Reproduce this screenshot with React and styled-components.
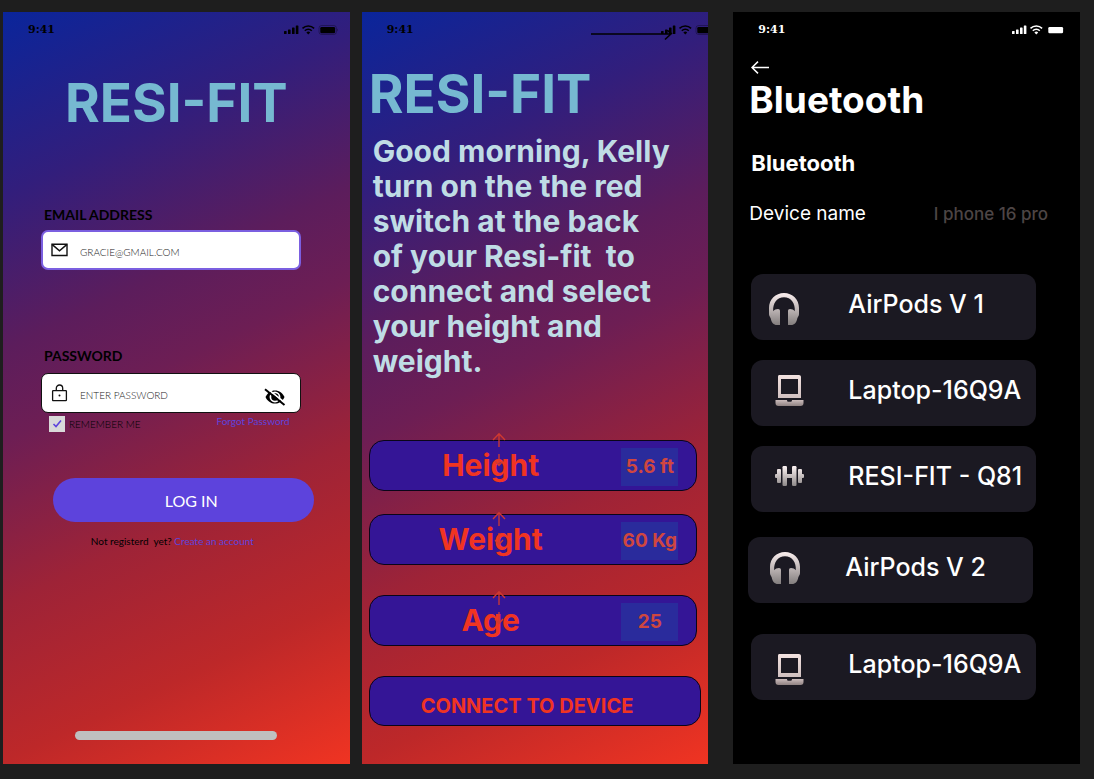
import React, { useState } from "react";
import styled, { createGlobalStyle } from "styled-components";

const GlobalStyle = createGlobalStyle`
  *, *::before, *::after { box-sizing: border-box; }
  body { margin: 0; background: #1e1e1e; }
  h1, h2, p, ul { margin: 0; padding: 0; }
  button, input { font: inherit; color: inherit; margin: 0; padding: 0; border: 0; background: none; }
  button { cursor: pointer; }
  svg { display: block; flex: none; }
`;

const sans = `Inter, "Liberation Sans", sans-serif`;
const lato = `Lato, "Liberation Sans", sans-serif`;

const Board = styled.main`
  display: flex;
  min-height: 100vh;
  padding: 12px 14px 15px 3px;
  font-family: ${sans};
`;

const Screen = styled.section`
  flex: 1 1 0;
  min-width: 0;
  display: flex;
  flex-direction: column;
  overflow: hidden;
  margin-left: ${(p) => p.$gap || 0}px;
  color: ${(p) => (p.$dark ? "#fff" : "#000")};
  background: ${(p) =>
    p.$dark
      ? "#000"
      : "linear-gradient(155deg, #0a259b 0%, #321e7c 20%, #5c1d5c 37%, #6d1e54 47%, #9e2337 65%, #bd2829 82%, #f03422 100%)"};
`;

const StatusBar = styled.header`
  display: flex;
  align-items: center;
  justify-content: space-between;
  height: 36px;
  padding: 0 ${(p) => p.$right}px 0 25px;
  flex: none;
`;

const Time = styled.span`
  font: bold 11px/16px "DejaVu Serif", serif;
`;

const StatusIcons = styled.div`
  position: relative;
  margin-right: ${(p) => (p.$bleed ? -7 : 0)}px;
`;

const StrayArrow = styled.svg`
  position: absolute;
  right: 41px;
  top: 6px;
`;

const Brand = styled.h1`
  font-size: 53px;
  line-height: 64px;
  font-weight: 700;
  color: #76b9d1;
  text-align: ${(p) => p.$align || "left"};
  margin-top: ${(p) => p.$top}px;
`;

const LoginForm = styled.form`
  flex: 1;
  display: flex;
  flex-direction: column;
  font-family: ${lato};
`;

const Field = styled.div`
  display: flex;
  flex-direction: column;
  padding: 0 49px 0 38px;
  margin-top: ${(p) => p.$top}px;
`;

const FieldLabel = styled.label`
  font-size: 14px;
  line-height: 16px;
  font-weight: 700;
  padding-left: 3px;
`;

const InputBox = styled.div`
  display: flex;
  align-items: center;
  height: 40px;
  margin-top: ${(p) => p.$top}px;
  padding: 0 14px 0 ${(p) => (p.$active ? 8 : 9)}px;
  gap: 12px;
  background: #fff;
  border-radius: 7px;
  border: ${(p) => (p.$active ? "2px solid #7b5fe0" : "1px solid #111")};
`;

const TextInput = styled.input`
  flex: 1;
  min-width: 0;
  height: 16px;
  margin-top: 4px;
  font-size: 10px;
  font-weight: 300;
  outline: none;
  color: #222;
  &::placeholder { color: #222; opacity: 1; }
`;

const EyeButton = styled.button`
  margin-top: 8px;
`;

const Options = styled.div`
  display: flex;
  align-items: center;
  justify-content: space-between;
  padding: 0 60px 0 46px;
  margin-top: 3px;
`;

const Remember = styled.label`
  display: flex;
  align-items: center;
  gap: 4px;
  font-size: 10px;
  line-height: 16px;
  font-weight: 300;
`;

const Tick = styled.input`
  appearance: none;
  width: 16px;
  height: 16px;
  background: #d9d9d9;
  &:checked {
    background: #d9d9d9
      url("data:image/svg+xml,%3Csvg xmlns='http://www.w3.org/2000/svg' viewBox='0 0 16 16'%3E%3Cpath d='M4.5 8l2.5 2.5 5-6' fill='none' stroke='%235d43dc' stroke-width='1.6'/%3E%3C/svg%3E");
  }
`;

const TextLink = styled.a`
  color: #5d43dc;
  text-decoration: none;
  font-size: 10px;
  line-height: 16px;
`;

const ForgotLink = styled(TextLink)`
  align-self: flex-start;
  line-height: 10px;
`;

const LoginButton = styled.button`
  height: 44px;
  margin: 46px 36px 0 50px;
  padding-left: 16px;
  border-radius: 22px;
  background: #5d43dc;
  color: #fff;
  font-size: 16px;
`;

const SignUp = styled.p`
  margin-top: 11px;
  padding-right: 8px;
  text-align: center;
  white-space: pre;
  font-size: 10px;
  line-height: 16px;
`;

const HomeBar = styled.div`
  width: 202px;
  height: 9px;
  border-radius: 5px;
  background: #bfbfbf;
  margin: auto auto 24px;
`;

const SetupForm = styled.form`
  padding: 0 7px;
`;

const Greeting = styled.p`
  margin: 8px 0 0 4px;
  white-space: pre-line;
  font-size: 30px;
  line-height: 35px;
  font-weight: 700;
  color: #bfdce5;
`;

const Pill = styled.div`
  position: relative;
  display: grid;
  grid-template-columns: 224px 1fr;
  align-items: center;
  height: 51px;
  margin: ${(p) => p.$top}px 4px 0 0;
  padding: 0 18px 0 9px;
  border: 1px solid #0a0518;
  border-radius: 15px;
  background: #341596;
`;

const PillLabel = styled.label`
  font-size: 30px;
  line-height: 35px;
  font-weight: 700;
  color: #f03422;
  text-align: center;
`;

const PillValue = styled.input`
  justify-self: end;
  width: 57px;
  height: 38px;
  margin-top: 2px;
  text-align: center;
  font-size: 19px;
  font-weight: 700;
  color: #cf4640;
  background: #2a2b9c;
  outline: none;
`;

const Stepper = styled.div`
  position: absolute;
  left: 122px;
  top: ${(p) => p.$top}px;
  display: flex;
  flex-direction: column;
  gap: 7px;
`;

const ConnectButton = styled.button`
  display: block;
  width: 100%;
  height: 50px;
  margin-top: 30px;
  padding: 10px 16px 0 0;
  border: 1px solid #0a0518;
  border-radius: 15px;
  background: #341596;
  color: #f03422;
  font-size: 20px;
  font-weight: 700;
`;

const Settings = styled.div`
  display: flex;
  flex-direction: column;
  padding: 0 15px 0 16px;
`;

const BackButton = styled.button`
  align-self: flex-start;
  margin: 13px 0 0 2px;
`;

const PageTitle = styled.h1`
  font-size: 37px;
  line-height: 40px;
  font-weight: 700;
  margin-top: 6px;
`;

const SectionTitle = styled.h2`
  font-size: 22px;
  line-height: 24px;
  font-weight: 700;
  margin: 31px 0 0 2px;
`;

const DeviceRow = styled.div`
  display: flex;
  align-items: center;
  justify-content: space-between;
  padding-right: 17px;
  margin-top: 27px;
  font-size: 19px;
  line-height: 24px;
`;

const DeviceName = styled.span`
  font-size: 17px;
  font-weight: 500;
  color: #4d4545;
`;

const DeviceList = styled.ul`
  list-style: none;
  margin: 48px 29px 0 2px;
`;

const Device = styled.li`
  margin: ${(p) => p.$top || 0}px ${(p) => p.$shift || 0}px 0 ${(p) => -(p.$shift || 0)}px;
`;

const DeviceButton = styled.button`
  display: grid;
  grid-template-columns: 79px 1fr;
  align-items: center;
  width: 100%;
  height: 66px;
  padding-left: 18px;
  border-radius: 12px;
  background: #1b1922;
  text-align: left;
  white-space: nowrap;
`;

const DeviceLabel = styled.span`
  font-size: 25px;
  line-height: 30px;
  font-weight: 500;
  padding-bottom: 6px;
`;

const IconSlot = styled.span`
  padding: ${(p) => p.$pad};
`;

function Status({ right, bleed, outline }) {
  return (
    <StatusBar $right={right}>
      <Time>9:41</Time>
      <StatusIcons $bleed={bleed}>
        <svg width="54" height="12" viewBox="0 0 54 12" fill="currentColor">
          <rect x="0" y="7" width="2.6" height="3" rx=".6" />
          <rect x="4" y="5.5" width="2.6" height="4.5" rx=".6" />
          <rect x="8" y="3.5" width="2.6" height="6.5" rx=".6" />
          <rect x="11.8" y="1.5" width="2.6" height="8.5" rx=".6" />
          <g fill="none" stroke="currentColor" strokeWidth="1.5">
            <path d="M18.5 4.4a8.3 8.3 0 0 1 11.6 0" />
            <path d="M20.8 6.8a5 5 0 0 1 7 0" />
          </g>
          <path d="M24.3 10.4l-1.9-1.9a2.7 2.7 0 0 1 3.8 0z" />
          {outline && <rect x="35" y="1.5" width="17.4" height="9" rx="2.6" fill="none" stroke="currentColor" opacity=".3" />}
          <rect x="36.3" y="2.9" width="14.8" height="6.3" rx="1.3" />
          {outline && <path d="M53.2 4.6v2.8c1-.5 1-2.3 0-2.8z" opacity=".4" />}
        </svg>
        {bleed && (
          <StrayArrow width="84" height="12" viewBox="0 0 84 12" fill="none" stroke="currentColor" strokeWidth="1.6">
            <path d="M1 4h79M77 0l4 3.500M82 3l-7 6.500" />
          </StrayArrow>
        )}
      </StatusIcons>
    </StatusBar>
  );
}

const Mail = () => (
  <svg width="17" height="14" viewBox="0 0 17 14" fill="none" stroke="#111" strokeWidth="1.4">
    <path d="M1 1.2h15v11.3H1z" />
    <path d="M1 1.4l7.5 6.4L16 1.4" />
  </svg>
);

const Lock = () => (
  <svg width="17" height="18" viewBox="0 0 17 18" fill="none" stroke="#111" strokeWidth="1.3">
    <rect x="1.6" y="6.6" width="13.8" height="10" rx=".6" />
    <path d="M5.3 6.6V4.2a3.2 3.2 0 0 1 6.4 0v2.4" />
    <circle cx="8.5" cy="11.4" r="1" fill="#111" stroke="none" />
  </svg>
);

const EyeOff = () => (
  <svg width="22" height="20" viewBox="0 0 22 20">
    <path
      d="M1.500 10C3.200 6 6.800 3.400 11 3.400S18.800 6 20.500 10C18.800 14 15.200 16.600 11 16.600S3.200 14 1.500 10z"
      fill="#000"
    />
    <circle cx="11" cy="10" r="4.600" fill="none" stroke="#fff" strokeWidth="1.700" />
    <path d="M2.300 .9L21.500 16.300" stroke="#fff" strokeWidth="1.800" />
    <path d="M1 2.300L20.500 18" stroke="#000" strokeWidth="2" />
  </svg>
);

const Arrow = ({ down }) => (
  <svg width="14" height="15" viewBox="0 0 14 15" fill="none" stroke="#d13a30" strokeWidth="1.3">
    <path d={down ? "M7 0v12M3 7l4 4.500L11 7" : "M7 15V2M1 8l6-6.3L13 8"} />
  </svg>
);

const Headphones = ({ id }) => (
  <svg width="30" height="32" viewBox="0 0 30 32">
    <defs>
      <linearGradient id={id} x1="0" y1="0" x2="0" y2="1">
        <stop offset="0" stopColor="#fbefef" />
        <stop offset="1" stopColor="#837e7e" />
      </linearGradient>
    </defs>
    <path
      fill={`url(#${id})`}
      d="M15 0C6.500 0 0 6.600 0 15v6c0 2 .8 2.300 1.600 4C2.400 29.500 4.500 32 8 32h3V18.200C11 16.800 10.300 16 9 16c-2 0-3.600.8-4.800 2.200C3.600 10.500 8 4.300 15 4.300S26.400 10.500 25.800 18.200C24.600 16.800 23 16 21 16c-1.300 0-2 .8-2 2.200V32h3c3.500 0 5.600-2.500 6.400-7C29.200 23.300 30 23 30 21v-6C30 6.600 23.500 0 15 0z"
    />
  </svg>
);

const Laptop = ({ id }) => (
  <svg width="29" height="31" viewBox="0 0 29 31">
    <defs>
      <linearGradient id={id} x1="0" y1="0" x2="0" y2="31" gradientUnits="userSpaceOnUse">
        <stop offset="0" stopColor="#f3e2e0" />
        <stop offset=".8" stopColor="#cdbdbd" />
        <stop offset="1" stopColor="#8f8282" />
      </linearGradient>
    </defs>
    <g fill={`url(#${id})`}>
      <path fillRule="evenodd" d="M4 0h20c1 0 2 .8 2 2v21H3V2c0-1.200.5-2 1-2zm2 4v15h17V4z" />
      <path d="M.5 25H12c0 1.300.7 1.800 1.500 1.800h2c.8 0 1.500-.5 1.500-1.800h11.500v3c0 1.800-1 3-3 3h-22c-2 0-3-1.200-3-3z" />
    </g>
  </svg>
);

const Dumbbell = ({ id }) => (
  <svg width="29" height="20" viewBox="0 0 29 20">
    <defs>
      <linearGradient id={id} x1="0" y1="0" x2="0" y2="20" gradientUnits="userSpaceOnUse">
        <stop offset="0" stopColor="#fff5f5" />
        <stop offset="1" stopColor="#8d8888" />
      </linearGradient>
    </defs>
    <g fill={`url(#${id})`}>
      <rect x="0" y="8" width="3" height="4" rx="1" />
      <rect x="2" y="3" width="4" height="14" rx="1" />
      <rect x="7.500" y="0" width="4.500" height="20" rx="1.200" />
      <rect x="12" y="8" width="5" height="4" />
      <rect x="17" y="0" width="4.500" height="20" rx="1.200" />
      <rect x="23" y="3" width="4" height="14" rx="1" />
      <rect x="26" y="8" width="3" height="4" rx="1" />
    </g>
  </svg>
);

const measures = [
  { id: "height", label: "Height", value: "5.6 ft", top: 61, arrows: -9 },
  { id: "weight", label: "Weight", value: "60 Kg", top: 23, arrows: -4 },
  { id: "age", label: "Age", value: "25", top: 30, arrows: -6 },
];

const devices = [
  { id: "pods1", name: "AirPods V 1", Icon: Headphones, pad: "4px 0 0" },
  { id: "laptop1", name: "Laptop-16Q9A", Icon: Laptop, pad: "0 0 5px 6px", top: 20 },
  { id: "resifit", name: "RESI-FIT - Q81", Icon: Dumbbell, pad: "0 0 6px 6px", top: 20 },
  { id: "pods2", name: "AirPods V 2", Icon: Headphones, pad: "0 0 4px 4px", top: 25, shift: 3 },
  { id: "laptop2", name: "Laptop-16Q9A", Icon: Laptop, pad: "5px 0 0 6px", top: 31 },
];

function LoginScreen() {
  const [remember, setRemember] = useState(true);
  const [visible, setVisible] = useState(false);
  return (
    <Screen>
      <Status right={12} outline />
      <Brand $align="center" $top={23}>RESI-FIT</Brand>
      <LoginForm onSubmit={(e) => e.preventDefault()}>
        <Field $top={72}>
          <FieldLabel htmlFor="email">EMAIL ADDRESS</FieldLabel>
          <InputBox $active $top={7}>
            <Mail />
            <TextInput id="email" type="email" placeholder="GRACIE@GMAIL.COM" />
          </InputBox>
        </Field>
        <Field $top={78}>
          <FieldLabel htmlFor="password">PASSWORD</FieldLabel>
          <InputBox $top={9}>
            <Lock />
            <TextInput id="password" type={visible ? "text" : "password"} placeholder="ENTER PASSWORD" />
            <EyeButton type="button" aria-label="Show password" onClick={() => setVisible(!visible)}>
              <EyeOff />
            </EyeButton>
          </InputBox>
        </Field>
        <Options>
          <Remember>
            <Tick type="checkbox" checked={remember} onChange={() => setRemember(!remember)} />
            REMEMBER ME
          </Remember>
          <ForgotLink href="#forgot">Forgot Password</ForgotLink>
        </Options>
        <LoginButton type="submit">LOG IN</LoginButton>
        <SignUp>
          {"Not registerd  yet? "}
          <TextLink href="#signup">Create an account</TextLink>
        </SignUp>
        <HomeBar />
      </LoginForm>
    </Screen>
  );
}

function SetupScreen() {
  return (
    <Screen $gap={12}>
      <Status right={0} outline bleed />
      <SetupForm onSubmit={(e) => e.preventDefault()}>
        <Brand $top={14}>RESI-FIT</Brand>
        <Greeting>
          {"Good morning, Kelly\nturn on the the red\nswitch at the back\nof your Resi-fit \u00a0to\nconnect and select\nyour height and\nweight."}
        </Greeting>
        {measures.map((m) => (
          <Pill key={m.id} $top={m.top}>
            <PillLabel htmlFor={m.id}>{m.label}</PillLabel>
            <PillValue id={m.id} defaultValue={m.value} />
            <Stepper $top={m.arrows}>
              <button type="button" aria-label={`Increase ${m.label}`}><Arrow /></button>
              <button type="button" aria-label={`Decrease ${m.label}`}><Arrow down /></button>
            </Stepper>
          </Pill>
        ))}
        <ConnectButton type="submit">CONNECT TO DEVICE</ConnectButton>
      </SetupForm>
    </Screen>
  );
}

function BluetoothScreen() {
  return (
    <Screen $gap={25} $dark>
      <Status right={14} />
      <Settings>
        <BackButton aria-label="Back">
          <svg width="18" height="13" viewBox="0 0 18 13" fill="none" stroke="#fff" strokeWidth="1.500">
            <path d="M18 6.500H1M7 .6L1 6.500l6 5.900" />
          </svg>
        </BackButton>
        <PageTitle>Bluetooth</PageTitle>
        <SectionTitle>Bluetooth</SectionTitle>
        <DeviceRow>
          <span>Device name</span>
          <DeviceName>I phone 16 pro</DeviceName>
        </DeviceRow>
        <DeviceList>
          {devices.map(({ id, name, Icon, pad, top, shift }) => (
            <Device key={id} $top={top} $shift={shift}>
              <DeviceButton type="button">
                <IconSlot $pad={pad}><Icon id={id} /></IconSlot>
                <DeviceLabel>{name}</DeviceLabel>
              </DeviceButton>
            </Device>
          ))}
        </DeviceList>
      </Settings>
    </Screen>
  );
}

export default function App() {
  return (
    <>
      <GlobalStyle />
      <Board>
        <LoginScreen />
        <SetupScreen />
        <BluetoothScreen />
      </Board>
    </>
  );
}
